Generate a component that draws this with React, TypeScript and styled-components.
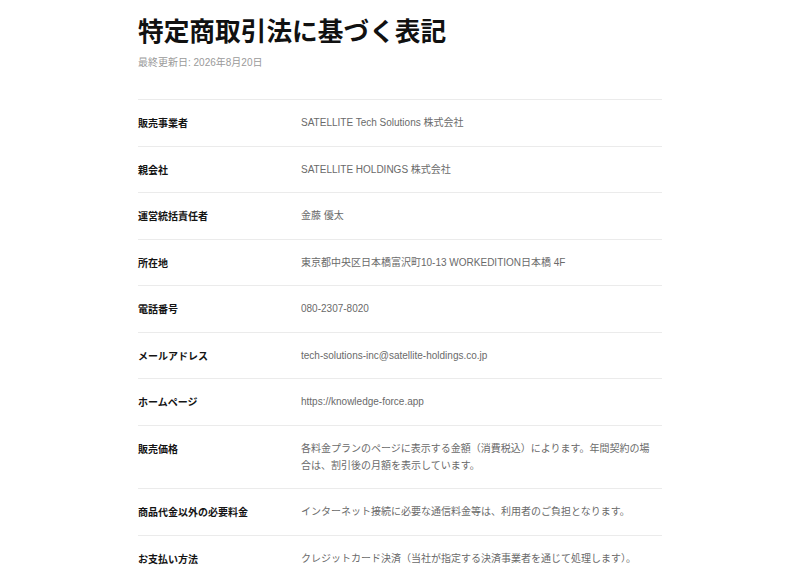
import React from "react";
import styled, { createGlobalStyle } from "styled-components";

const Global = createGlobalStyle`
  html, body {
    margin: 0;
    padding: 0;
    background: #ffffff;
  }
  body {
    font-family: "Liberation Sans", "Noto Sans CJK JP", sans-serif;
    color: #111111;
    -webkit-font-smoothing: antialiased;
  }
`;

const Page = styled.main`
  max-width: 524px;
  margin: 0 auto;
  padding-top: 13px;
`;

const Title = styled.h1`
  margin: 0;
  font-family: "Noto Sans CJK JP", sans-serif;
  font-size: 25.7px;
  line-height: 34px;
  font-weight: 700;
  color: #111111;
`;

const Updated = styled.p`
  margin: 9px 0 0;
  font-size: 10px;
  line-height: 14px;
  color: #9a9a9a;
`;

const List = styled.dl`
  margin: 29px 0 0;
  padding: 0;
`;

const Row = styled.div`
  display: grid;
  grid-template-columns: 163px 1fr;
  border-top: 1px solid #ebebeb;
  padding: 14.25px 0;
  font-size: 10px;
  line-height: 17px;
`;

const Label = styled.dt`
  margin: 0;
  font-family: "Noto Sans CJK JP", sans-serif;
  font-weight: 700;
  color: #141414;
`;

const Value = styled.dd`
  margin: 0;
  padding-right: 8px;
  color: #6a6a6a;
`;

const rows: [string, string][] = [
  ["販売事業者", "SATELLITE Tech Solutions 株式会社"],
  ["親会社", "SATELLITE HOLDINGS 株式会社"],
  ["運営統括責任者", "金藤 優太"],
  ["所在地", "東京都中央区日本橋富沢町10-13 WORKEDITION日本橋 4F"],
  ["電話番号", "080-2307-8020"],
  ["メールアドレス", "tech-solutions-inc@satellite-holdings.co.jp"],
  ["ホームページ", "https://knowledge-force.app"],
  [
    "販売価格",
    "各料金プランのページに表示する金額（消費税込）によります。年間契約の場合は、割引後の月額を表示しています。",
  ],
  ["商品代金以外の必要料金", "インターネット接続に必要な通信料金等は、利用者のご負担となります。"],
  ["お支払い方法", "クレジットカード決済（当社が指定する決済事業者を通じて処理します）。"],
];

export default function App() {
  return (
    <>
      <Global />
      <Page>
        <Title>特定商取引法に基づく表記</Title>
        <Updated>最終更新日: 2026年8月20日</Updated>
        <List>
          {rows.map(([label, value]) => (
            <Row key={label}>
              <Label>{label}</Label>
              <Value>{value}</Value>
            </Row>
          ))}
        </List>
      </Page>
    </>
  );
}
